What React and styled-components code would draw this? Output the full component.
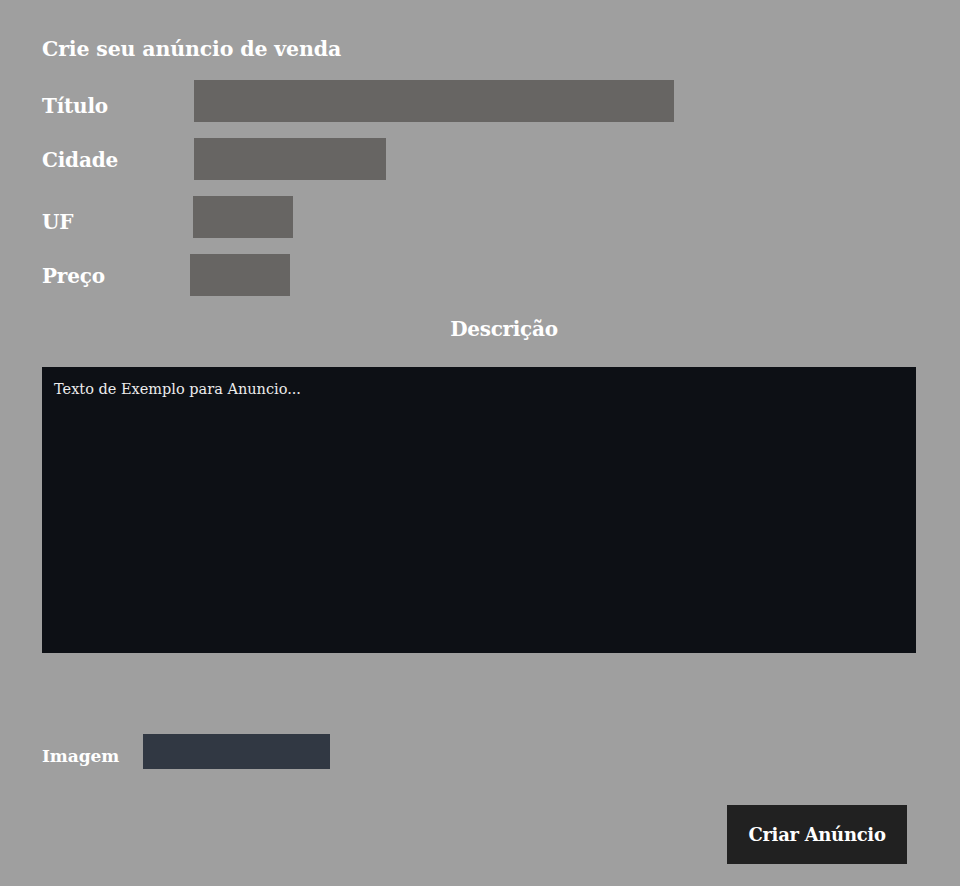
import React from 'react'
import styled, { createGlobalStyle } from 'styled-components'

const GlobalStyle = createGlobalStyle`
  html, body {
    margin: 0;
    padding: 0;
    background: #9f9f9f;
  }
  body {
    font-family: "DejaVu Serif", "Liberation Serif", serif;
    color: #ffffff;
  }
`

const Page = styled.div`
  width: 960px;
  height: 886px;
  box-sizing: border-box;
  padding: 35px 44px 0 42px;
  background: #9f9f9f;
`

const Heading = styled.h1`
  margin: 0 0 17px;
  font-size: 20.5px;
  font-weight: bold;
  line-height: 28px;
  letter-spacing: -0.15px;
`

const Row = styled.div`
  display: flex;
  align-items: center;
  height: 42px;
  margin-bottom: 16px;
`

const Label = styled.label`
  width: ${p => p.$width}px;
  font-size: 20px;
  font-weight: bold;
  padding-top: ${p => p.$drop}px;
  letter-spacing: -0.2px;
`

const Field = styled.div`
  width: ${p => p.$size}px;
  height: 42px;
  background: #676563;
`

const DescTitle = styled.h2`
  margin: 18px 0 0;
  padding-left: 50px;
  text-align: center;
  font-size: 20px;
  font-weight: bold;
  line-height: 30px;
  letter-spacing: -0.3px;
`

const TextArea = styled.div`
  margin-top: 23px;
  width: 874px;
  height: 286px;
  box-sizing: border-box;
  padding: 14px 12px;
  background: #0d1015;
  color: #ececec;
  font-size: 14.5px;
`

const ImageRow = styled.div`
  display: flex;
  align-items: center;
  margin-top: 81px;
`

const SmallLabel = styled.span`
  width: 101px;
  font-size: 17px;
  font-weight: bold;
  padding-top: 8px;
  letter-spacing: -0.1px;
`

const FileBox = styled.div`
  width: 187px;
  height: 35px;
  background: #313843;
`

const Actions = styled.div`
  display: flex;
  justify-content: flex-end;
  margin-top: 36px;
  padding-right: 9px;
`

const Button = styled.button`
  width: 180px;
  height: 59px;
  border: none;
  background: #212121;
  color: #ffffff;
  font-family: "DejaVu Serif", "Liberation Serif", serif;
  font-size: 18px;
  font-weight: bold;
  letter-spacing: -0.3px;
  cursor: pointer;
`

const fields = [
  { name: 'Título', width: 152, size: 480, drop: 9 },
  { name: 'Cidade', width: 152, size: 192, drop: 1 },
  { name: 'UF', width: 151, size: 100, drop: 9 },
  { name: 'Preço', width: 148, size: 100, drop: 1 },
]

export default function App() {
  return (
    <>
      <GlobalStyle />
      <Page>
        <Heading>Crie seu anúncio de venda</Heading>
        {fields.map(f => (
          <Row key={f.name}>
            <Label $width={f.width} $drop={f.drop}>{f.name}</Label>
            <Field $size={f.size} />
          </Row>
        ))}
        <DescTitle>Descrição</DescTitle>
        <TextArea>Texto de Exemplo para Anuncio...</TextArea>
        <ImageRow>
          <SmallLabel>Imagem</SmallLabel>
          <FileBox />
        </ImageRow>
        <Actions>
          <Button>Criar Anúncio</Button>
        </Actions>
      </Page>
    </>
  )
}
